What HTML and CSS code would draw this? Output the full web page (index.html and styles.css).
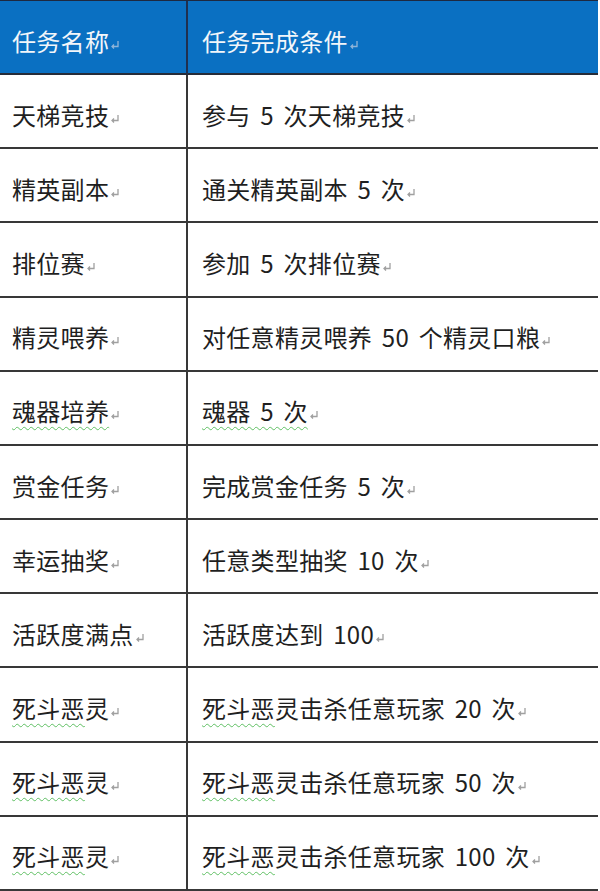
FILE: index.html
```html
<!DOCTYPE html>
<html lang="zh">
<head>
<meta charset="utf-8">
<title>任务列表</title>
<link rel="stylesheet" href="styles.css">
</head>
<body>
<div class="table">
  <div class="cell c1 head">任务名称<svg class="ret" viewBox="0 0 10 10"><path d="M8 1V6.5H2M4 4.5L2 6.5L4 8.5"/></svg></div>
  <div class="cell c2 head">任务完成条件<svg class="ret" viewBox="0 0 10 10"><path d="M8 1V6.5H2M4 4.5L2 6.5L4 8.5"/></svg></div>

  <div class="cell c1">天梯竞技<svg class="ret" viewBox="0 0 10 10"><path d="M8 1V6.5H2M4 4.5L2 6.5L4 8.5"/></svg></div>
  <div class="cell c2">参与 5 次天梯竞技<svg class="ret" viewBox="0 0 10 10"><path d="M8 1V6.5H2M4 4.5L2 6.5L4 8.5"/></svg></div>

  <div class="cell c1">精英副本<svg class="ret" viewBox="0 0 10 10"><path d="M8 1V6.5H2M4 4.5L2 6.5L4 8.5"/></svg></div>
  <div class="cell c2">通关精英副本 5 次<svg class="ret" viewBox="0 0 10 10"><path d="M8 1V6.5H2M4 4.5L2 6.5L4 8.5"/></svg></div>

  <div class="cell c1">排位赛<svg class="ret" viewBox="0 0 10 10"><path d="M8 1V6.5H2M4 4.5L2 6.5L4 8.5"/></svg></div>
  <div class="cell c2">参加 5 次排位赛<svg class="ret" viewBox="0 0 10 10"><path d="M8 1V6.5H2M4 4.5L2 6.5L4 8.5"/></svg></div>

  <div class="cell c1">精灵喂养<svg class="ret" viewBox="0 0 10 10"><path d="M8 1V6.5H2M4 4.5L2 6.5L4 8.5"/></svg></div>
  <div class="cell c2">对任意精灵喂养 50 个精灵口粮<svg class="ret" viewBox="0 0 10 10"><path d="M8 1V6.5H2M4 4.5L2 6.5L4 8.5"/></svg></div>

  <div class="cell c1"><span class="wavy">魂器培养</span><svg class="ret" viewBox="0 0 10 10"><path d="M8 1V6.5H2M4 4.5L2 6.5L4 8.5"/></svg></div>
  <div class="cell c2"><span class="wavy">魂器 5 次</span><svg class="ret" viewBox="0 0 10 10"><path d="M8 1V6.5H2M4 4.5L2 6.5L4 8.5"/></svg></div>

  <div class="cell c1">赏金任务<svg class="ret" viewBox="0 0 10 10"><path d="M8 1V6.5H2M4 4.5L2 6.5L4 8.5"/></svg></div>
  <div class="cell c2">完成赏金任务 5 次<svg class="ret" viewBox="0 0 10 10"><path d="M8 1V6.5H2M4 4.5L2 6.5L4 8.5"/></svg></div>

  <div class="cell c1">幸运抽奖<svg class="ret" viewBox="0 0 10 10"><path d="M8 1V6.5H2M4 4.5L2 6.5L4 8.5"/></svg></div>
  <div class="cell c2">任意类型抽奖 10 次<svg class="ret" viewBox="0 0 10 10"><path d="M8 1V6.5H2M4 4.5L2 6.5L4 8.5"/></svg></div>

  <div class="cell c1">活跃度满点<svg class="ret" viewBox="0 0 10 10"><path d="M8 1V6.5H2M4 4.5L2 6.5L4 8.5"/></svg></div>
  <div class="cell c2">活跃度达到 100<svg class="ret" viewBox="0 0 10 10"><path d="M8 1V6.5H2M4 4.5L2 6.5L4 8.5"/></svg></div>

  <div class="cell c1"><span class="wavy">死斗恶</span>灵<svg class="ret" viewBox="0 0 10 10"><path d="M8 1V6.5H2M4 4.5L2 6.5L4 8.5"/></svg></div>
  <div class="cell c2"><span class="wavy">死斗恶</span>灵击杀任意玩家 20 次<svg class="ret" viewBox="0 0 10 10"><path d="M8 1V6.5H2M4 4.5L2 6.5L4 8.5"/></svg></div>

  <div class="cell c1"><span class="wavy">死斗恶</span>灵<svg class="ret" viewBox="0 0 10 10"><path d="M8 1V6.5H2M4 4.5L2 6.5L4 8.5"/></svg></div>
  <div class="cell c2"><span class="wavy">死斗恶</span>灵击杀任意玩家 50 次<svg class="ret" viewBox="0 0 10 10"><path d="M8 1V6.5H2M4 4.5L2 6.5L4 8.5"/></svg></div>

  <div class="cell c1"><span class="wavy">死斗恶</span>灵<svg class="ret" viewBox="0 0 10 10"><path d="M8 1V6.5H2M4 4.5L2 6.5L4 8.5"/></svg></div>
  <div class="cell c2"><span class="wavy">死斗恶</span>灵击杀任意玩家 100 次<svg class="ret" viewBox="0 0 10 10"><path d="M8 1V6.5H2M4 4.5L2 6.5L4 8.5"/></svg></div>
</div>
</body>
</html>
```

FILE: styles.css
```css
html, body {
  margin: 0;
  padding: 0;
  background: #ffffff;
}

body {
  font-family: "Noto Sans CJK SC", "Microsoft YaHei", sans-serif;
  font-size: 24px;
  color: #1f1f1f;
}

.table {
  display: grid;
  grid-template-columns: 188px 410px;
  grid-auto-rows: 74.17px;
  width: 598px;
  border-top: 1px solid #1e2940;
}

.cell {
  box-sizing: border-box;
  display: flex;
  align-items: center;
  padding-top: 7px;
  border-bottom: 2px solid #383838;
  line-height: 1;
  white-space: pre;
  word-spacing: 4px;
  letter-spacing: 0.3px;
}

.c1 {
  padding-left: 12px;
  border-right: 2px solid #383838;
}

.c2 {
  padding-left: 14px;
}

.head {
  background: #0a70c2;
  color: #f2f6fa;
  border-bottom-color: #262c38;
}

.head.c1 {
  border-right-color: #1f3050;
}

.ret {
  width: 10px;
  height: 10px;
  margin-left: 1px;
  margin-top: 8px;
  flex: none;
  fill: none;
  stroke: #a0a0a0;
  stroke-width: 1.3;
}

.head .ret {
  stroke: #8fb4d8;
}

.wavy {
  text-decoration-line: underline;
  text-decoration-style: wavy;
  text-decoration-color: #5fbf63;
  text-decoration-thickness: 1px;
  text-underline-offset: 5px;
}
```
